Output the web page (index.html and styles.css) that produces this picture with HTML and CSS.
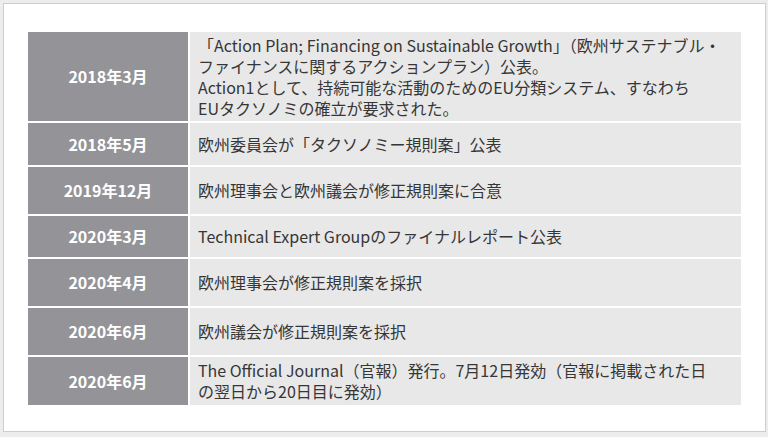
FILE: index.html
```html
<!DOCTYPE html>
<html lang="ja">
<head>
    <meta charset="UTF-8">
    <meta name="viewport" content="width=device-width, initial-scale=1.0">
    <title>EUタクソノミー規則の経緯</title>
    <link rel="stylesheet" href="styles.css">
</head>
<body>
    <div class="slide">
        <table class="timeline">
            <tbody>
                <tr class="row-tall">
                    <th>2018年3月</th>
                    <td>「Action Plan; Financing on Sustainable Growth」（欧州サステナブル・<br>ファイナンスに関するアクションプラン）公表。<br>Action1として、持続可能な活動のためのEU分類システム、すなわち<br>EUタクソノミの確立が要求された。</td>
                </tr>
                <tr class="row-a">
                    <th>2018年5月</th>
                    <td>欧州委員会が「タクソノミー規則案」公表</td>
                </tr>
                <tr class="row-b">
                    <th>2019年12月</th>
                    <td>欧州理事会と欧州議会が修正規則案に合意</td>
                </tr>
                <tr class="row-c">
                    <th>2020年3月</th>
                    <td>Technical Expert Groupのファイナルレポート公表</td>
                </tr>
                <tr class="row-b">
                    <th>2020年4月</th>
                    <td>欧州理事会が修正規則案を採択</td>
                </tr>
                <tr class="row-b">
                    <th>2020年6月</th>
                    <td>欧州議会が修正規則案を採択</td>
                </tr>
                <tr class="row-b">
                    <th>2020年6月</th>
                    <td>The Official Journal（官報）発行。7月12日発効（官報に掲載された日<br>の翌日から20日目に発効）</td>
                </tr>
            </tbody>
        </table>
    </div>
</body>
</html>
```

FILE: styles.css
```css
body {
    margin: 0;
    background-color: #ededed;
    font-family: "Noto Sans CJK JP", "Open Sans", sans-serif;
}
.slide {
    box-sizing: border-box;
    width: 763px;
    height: 429px;
    margin: 3px 0 0 3px;
    padding: 28px 0 0 24px;
    background-color: #fff;
    border: 1px solid #cdcdcd;
}
.timeline {
    border-collapse: collapse;
    width: 713px;
}
.timeline th,
.timeline td {
    border: 2px solid #fff;
    padding: 0;
    line-height: 21px;
    font-size: 16px;
}
.timeline tr:first-child th,
.timeline tr:first-child td {
    border-top: none;
}
.timeline tr:last-child th,
.timeline tr:last-child td {
    border-bottom: none;
}
.timeline th {
    border-left: none;
    width: 160px;
    background-color: #949498;
    color: #fff;
    font-weight: bold;
    text-align: center;
}
.timeline td {
    border-right: none;
    padding-left: 8px;
    background-color: #e8e8e8;
    color: #363636;
    text-align: left;
    white-space: nowrap;
}
.row-tall { height: 90px; }
.row-a { height: 44px; }
.row-b { height: 49px; }
.row-c { height: 43px; }
```
